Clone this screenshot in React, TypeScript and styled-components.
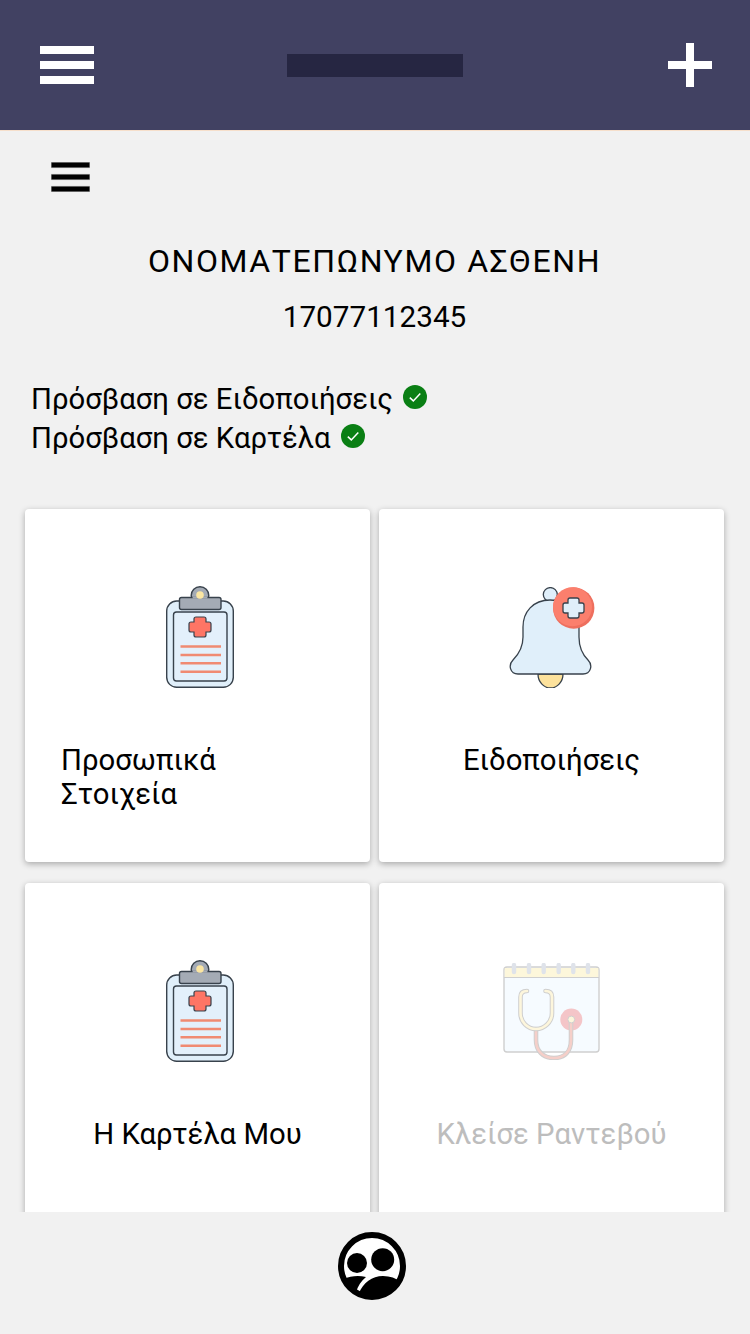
import React, { FC } from "react";
import styled, { createGlobalStyle } from "styled-components";

const GlobalStyle = createGlobalStyle`
  html, body {
    margin: 0;
    padding: 0;
    background: #f1f1f1;
  }
  body {
    font-family: Roboto, "Liberation Sans", Arial, sans-serif;
    color: #000;
  }
`;

const Page = styled.div`
  width: 750px;
  height: 1334px;
  display: flex;
  flex-direction: column;
  overflow: hidden;
`;

const Header = styled.header`
  flex: 0 0 130px;
  box-sizing: content-box;
  display: grid;
  grid-template-columns: 1fr auto 1fr;
  align-items: center;
  padding: 0 38px 0 40px;
  background: #414162;
  border-bottom: 1px solid #f6dfcb;
`;

const HeaderIcon = styled.svg<{ $end?: boolean }>`
  display: block;
  justify-self: ${(p) => (p.$end ? "end" : "start")};
`;

const Redacted = styled.div`
  width: 176px;
  height: 23px;
  margin: 1px 1px 0 -1px;
  background: #262642;
`;

const Main = styled.main`
  flex: 1;
  min-height: 0;
  overflow: hidden;
  padding: 31px 26px 0 25px;
`;

const MenuIcon = styled.svg`
  display: block;
  margin-left: 26px;
`;

const Patient = styled.section`
  margin-top: 51px;
  text-align: center;
`;

const PatientName = styled.div`
  font-size: 32px;
  line-height: 36px;
  letter-spacing: 1.6px;
`;

const PatientId = styled.div`
  margin-top: 20px;
  font-size: 29.7px;
  line-height: 36px;
`;

const AccessList = styled.section`
  margin: 44px 0 0 6px;
`;

const AccessRow = styled.div`
  display: flex;
  align-items: center;
  gap: 10px;
  height: 39px;
  font-size: 29.3px;
`;

const CheckIcon = styled.svg`
  display: block;
  margin-top: -3px;
`;

const CardGrid = styled.section`
  display: grid;
  grid-template-columns: 345px 345px;
  grid-auto-rows: 353px;
  column-gap: 9px;
  row-gap: 21px;
  margin-top: 52px;
`;

const Card = styled.article`
  display: flex;
  flex-direction: column;
  align-items: center;
  padding-top: 77px;
  box-sizing: border-box;
  background: #fff;
  border-radius: 4px;
  box-shadow: 0 2px 6px rgba(0, 0, 0, 0.3);
`;

const CardIcon = styled.div<{ $shift?: number; $drop?: number }>`
  height: 102px;
  box-sizing: border-box;
  display: flex;
  align-items: flex-start;
  margin-left: ${(p) => p.$shift ?? 0}px;
  padding-top: ${(p) => p.$drop ?? 0}px;
`;

const CardLabel = styled.div<{ $muted?: boolean; $left?: boolean }>`
  margin-top: 55px;
  align-self: ${(p) => (p.$left ? "flex-start" : "center")};
  margin-left: ${(p) => (p.$left ? "36px" : "0")};
  max-width: ${(p) => (p.$left ? "200px" : "none")};
  font-size: 29.3px;
  line-height: 34px;
  color: ${(p) => (p.$muted ? "#bdbdbd" : "#000")};
`;

const Footer = styled.footer`
  flex: 0 0 122px;
  display: flex;
  justify-content: center;
  padding: 20px 6px 0 0;
  box-sizing: border-box;
  background: #f1f1f1;
`;

const Check: FC = () => (
  <CheckIcon width="24" height="24" viewBox="0 0 24 24">
    <circle cx="12" cy="12" r="12" fill="#0a7f14" />
    <path d="M6.8 12.6l3.5 3.3 7-7.4" fill="none" stroke="#fff" strokeWidth="1.5" />
  </CheckIcon>
);

const ClipboardIcon: FC = () => (
  <svg width="68" height="102" viewBox="0 0 68 102">
    <rect x="0.7" y="15" width="66.6" height="86.3" rx="10" fill="#e0effa" stroke="#38424c" strokeWidth="1.4" />
    <rect x="7.5" y="26" width="53.5" height="69" rx="3" fill="#e3f0fb" stroke="#38424c" strokeWidth="1.4" />
    <circle cx="34" cy="9.5" r="8.8" fill="#a4abb5" stroke="#38424c" strokeWidth="1.4" />
    <rect x="13.5" y="11.5" width="41.5" height="12" rx="2" fill="#a4abb5" stroke="#38424c" strokeWidth="1.4" />
    <path d="M26.6 11.5h14.8" stroke="#a4abb5" strokeWidth="2" />
    <circle cx="34" cy="9" r="3.8" fill="#fbe6a2" />
    <path
      d="M30 31h8a2 2 0 0 1 2 2v3h3a2 2 0 0 1 2 2v6a2 2 0 0 1-2 2h-3v3a2 2 0 0 1-2 2h-8a2 2 0 0 1-2-2v-3h-3a2 2 0 0 1-2-2v-6a2 2 0 0 1 2-2h3v-3a2 2 0 0 1 2-2z"
      fill="#fe7565"
      stroke="#38424c"
      strokeWidth="1.2"
    />
    <path d="M14.5 60.5H55M14.5 69H55M14.5 77.3H55M14.5 85.8H55" stroke="#f08a72" strokeWidth="2.4" />
  </svg>
);

const BellIcon: FC = () => (
  <svg width="86" height="101" viewBox="0 0 86 101">
    <path d="M29 87a12.5 14 0 0 0 25 0z" fill="#fde29c" stroke="#38424c" strokeWidth="1.3" />
    <circle cx="41.3" cy="7.6" r="7" fill="#e0effa" stroke="#38424c" strokeWidth="1.3" />
    <path
      d="M41 13C24 13 14 25 14 40v10c0 10-4 17-10 23-5 5-3 14 5 14h65c8 0 10-9 5-14-6-6-9-13-9-23V40C70 25 58 13 41 13z"
      fill="#e0effa"
      stroke="#38424c"
      strokeWidth="1.3"
    />
    <circle cx="64.7" cy="21" r="20.7" fill="#ee6f5e" />
    <circle cx="63.5" cy="19.8" r="19.5" fill="#fb7f6d" />
    <path
      d="M61 11h7a2 2 0 0 1 2 2v3h3a2 2 0 0 1 2 2v6a2 2 0 0 1-2 2h-3v3a2 2 0 0 1-2 2h-7a2 2 0 0 1-2-2v-3h-3a2 2 0 0 1-2-2v-6a2 2 0 0 1 2-2h3v-3a2 2 0 0 1 2-2z"
      fill="#e0effa"
      stroke="#38424c"
      strokeWidth="1.3"
    />
  </svg>
);

const StethoscopeIcon: FC = () => (
  <svg width="97" height="97" viewBox="0 0 97 97">
    <rect x="1" y="4" width="95" height="85" rx="3" fill="#f6fbff" stroke="#cfcfcf" strokeWidth="1.4" />
    <path d="M1.7 5h93.6v9H1.7z" fill="#fdf7db" />
    <path d="M1 14.5h95" stroke="#cfcfcf" strokeWidth="1.2" />
    <path d="M11 2v7M26 2v7M40.7 2v7M55.7 2v7M70.3 2v7M85 2v7" stroke="#dfe3ea" strokeWidth="4.4" strokeLinecap="round" />
    <circle cx="68.3" cy="56.5" r="11" fill="#f4c5c8" />
    <g fill="none" strokeLinecap="round">
      <path d="M33 66v11c0 11 7 18 18 18s17-7 17-18V56" stroke="#cfcfcf" strokeWidth="4.6" />
      <path d="M33 66v11c0 11 7 18 18 18s17-7 17-18V56" stroke="#f5cfc9" strokeWidth="2.6" />
      <path d="M24 28c-4 0-6.5 2-6.5 6v16c0 9 7 16 15.5 16s16-7 16-16V34c0-4-2.5-6-6.5-6" stroke="#cfcfcf" strokeWidth="4.6" />
      <path d="M24 28c-4 0-6.5 2-6.5 6v16c0 9 7 16 15.5 16s16-7 16-16V34c0-4-2.5-6-6.5-6" stroke="#fdf6dc" strokeWidth="2.6" />
    </g>
    <circle cx="68.3" cy="56.5" r="3.4" fill="#fdf6dc" stroke="#cfcfcf" strokeWidth="1" />
  </svg>
);

const PeopleIcon: FC = () => (
  <svg width="68" height="68" viewBox="0 0 68 68">
    <circle cx="34" cy="34" r="31" fill="#fff" stroke="#000" strokeWidth="6" />
    <circle cx="19" cy="31" r="10" fill="#000" />
    <circle cx="44.7" cy="27.7" r="11.5" fill="#000" />
    <path
      d="M5 47C13 44 20 43 28 45 23 49 20 54 18 60L21 61C25 51 34 44 45 44 52 44 58 46 63 50 58 60 47 66 34 66 20 66 9 58 5 47z"
      fill="#000"
    />
  </svg>
);

export default function App() {
  return (
    <Page>
      <GlobalStyle />
      <Header>
        <HeaderIcon width="54" height="38" viewBox="0 0 54 38">
          <path d="M0 0h54v8H0zM0 15h54v8H0zM0 30h54v8H0z" fill="#fff" />
        </HeaderIcon>
        <Redacted />
        <HeaderIcon $end width="44" height="44" viewBox="0 0 44 44">
          <path d="M18 0h8v18h18v8H26v18h-8V26H0v-8h18z" fill="#fff" />
        </HeaderIcon>
      </Header>
      <Main>
        <MenuIcon width="39" height="30" viewBox="0 0 39 30">
          <path d="M0.2 0.2h38.6v5.6H0.2zM0.2 12.200h38.6v5.600H0.2zM0.2 24.200h38.6v5.600H0.2z" fill="#000" stroke="#c8c8c8" strokeWidth="0.4" />
        </MenuIcon>
        <Patient>
          <PatientName>ΟΝΟΜΑΤΕΠΩΝΥΜΟ ΑΣΘΕΝΗ</PatientName>
          <PatientId>17077112345</PatientId>
        </Patient>
        <AccessList>
          <AccessRow>
            Πρόσβαση σε Ειδοποιήσεις <Check />
          </AccessRow>
          <AccessRow>
            Πρόσβαση σε Καρτέλα <Check />
          </AccessRow>
        </AccessList>
        <CardGrid>
          <Card>
            <CardIcon $shift={5}>
              <ClipboardIcon />
            </CardIcon>
            <CardLabel $left>Προσωπικά Στοιχεία</CardLabel>
          </Card>
          <Card>
            <CardIcon $drop={1}>
              <BellIcon />
            </CardIcon>
            <CardLabel>Ειδοποιήσεις</CardLabel>
          </Card>
          <Card>
            <CardIcon $shift={5}>
              <ClipboardIcon />
            </CardIcon>
            <CardLabel>Η Καρτέλα Μου</CardLabel>
          </Card>
          <Card>
            <CardIcon $drop={3}>
              <StethoscopeIcon />
            </CardIcon>
            <CardLabel $muted>Κλείσε Ραντεβού</CardLabel>
          </Card>
        </CardGrid>
      </Main>
      <Footer>
        <PeopleIcon />
      </Footer>
    </Page>
  );
}
